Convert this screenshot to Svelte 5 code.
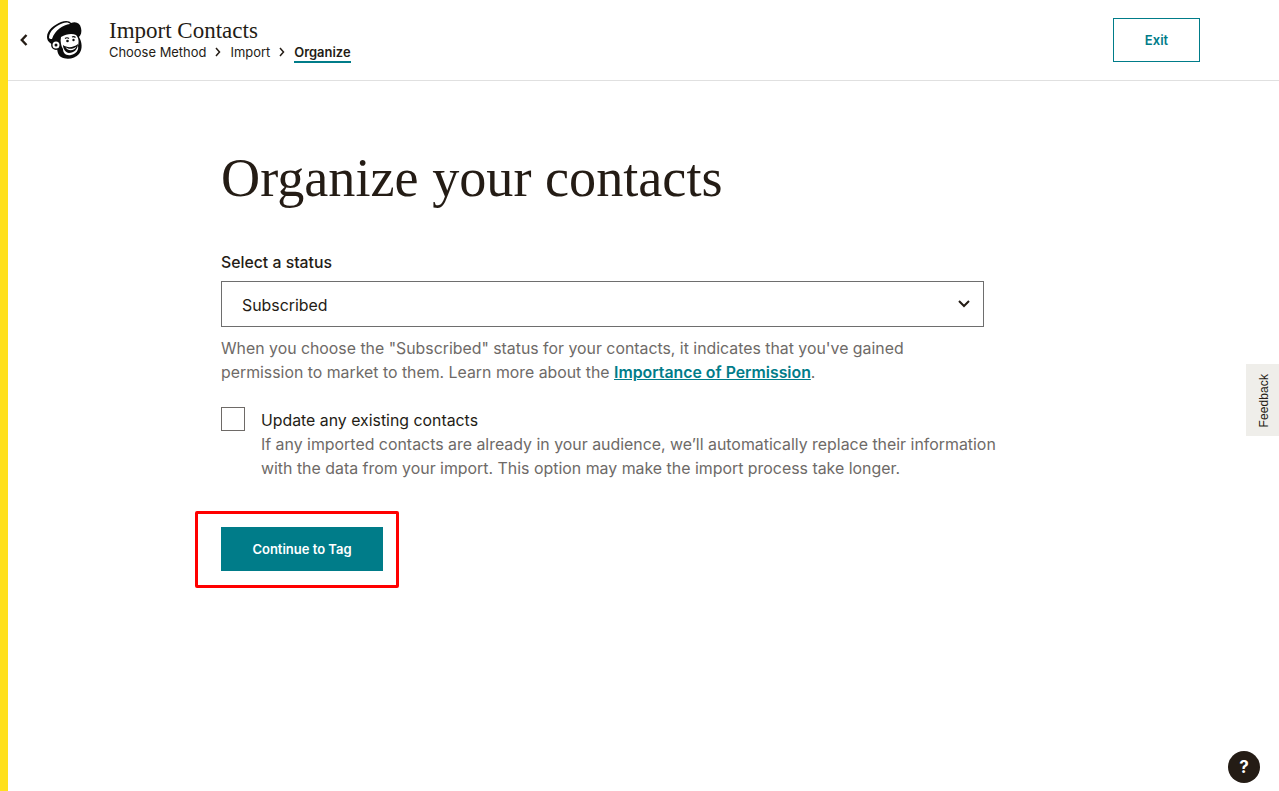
<script>
  const crumbs = ['Choose Method', 'Import'];
</script>

<div class="page">
  <div class="strip"></div>
  <div class="content">
    <header class="top">
      <button class="back" aria-label="Back">
        <svg width="10" height="14" viewBox="0 0 10 14"><path d="M7.500 2 L2.800 7 L7.500 12" fill="none" stroke="#241c15" stroke-width="2.400"/></svg>
      </button>
      <svg class="logo" width="38" height="40" viewBox="0 0 38 40" aria-label="Mailchimp">
        <path d="M11 26 C6 25 1 22 1 17 C1 10 8 5 15 2 C20 0 24 1 25 3 C30 1 34 3 35 8 C36 12 35 15 33 17 C36 22 37 29 33 34 C29 39 20 40 15 37 C12 35 11 31 11 26Z" fill="#0b0b0b"/>
        <path d="M3 17.500 C3 11 10 6 16 3.500 C20 2 23 2.500 24 4 C17 5 9 10 6 19 C4.500 19 3 18.500 3 17.500Z" fill="#fff"/>
        <path d="M15 17 C20 14 26 13 30 15 C33 18 33 22 32 26 C33 30 30 34 25 35 C20 36 17 33 17 29 C15 26 14 21 15 17Z" fill="#fff"/>
        <path d="M17 25 C21 28 27 28 32 24 C32 29 28 33 23 33 C20 33 17 29 17 25Z" fill="#0b0b0b"/>
        <path d="M19.500 27 C22 29.500 27 29.500 30.500 26.500 C29 30.500 22 32 19.500 27Z" fill="#fff"/>
        <path d="M19 18.500 q2 -1.500 4 0 M26 17 q2 -1 3.500 .5" fill="none" stroke="#0b0b0b" stroke-width="1.200"/>
        <circle cx="21.500" cy="21" r="1.300" fill="#0b0b0b"/>
        <circle cx="27.500" cy="20" r="1.200" fill="#0b0b0b"/>
        <circle cx="10" cy="25" r="4.200" fill="#fff" stroke="#0b0b0b" stroke-width="1.400"/>
        <circle cx="10" cy="25" r="1.500" fill="#0b0b0b"/>
      </svg>
      <div class="titles">
        <div class="title">Import Contacts</div>
        <nav class="crumbs">
          {#each crumbs as c}
            <span>{c}</span>
            <svg class="sep" width="6" height="10" viewBox="0 0 6 10"><path d="M1 1 L4.500 5 L1 9" fill="none" stroke="#241c15" stroke-width="1.500"/></svg>
          {/each}
          <span class="current">Organize</span>
        </nav>
      </div>
      <button class="exit">Exit</button>
    </header>

    <main class="main">
      <h1>Organize your contacts</h1>
      <div class="label">Select a status</div>
      <div class="select">
        <span>Subscribed</span>
        <svg width="12" height="8" viewBox="0 0 12 8"><path d="M1 1 L6 6 L11 1" fill="none" stroke="#241c15" stroke-width="2"/></svg>
      </div>
      <p class="help">When you choose the "Subscribed" status for your contacts, it indicates that you've gained permission to market to them. Learn more about the <a href="#top">Importance of Permission</a>.</p>
      <div class="check">
        <span class="box"></span>
        <div>
          <div class="check-title">Update any existing contacts</div>
          <p class="help flush">If any imported contacts are already in your audience, we’ll automatically replace their information with the data from your import. This option may make the import process take longer.</p>
        </div>
      </div>
      <div class="action">
        <button class="primary">Continue to Tag</button>
        <div class="highlight"></div>
      </div>
    </main>
  </div>
  <div class="feedback"><span>Feedback</span></div>
  <button class="helpbtn">?</button>
</div>

<style>
  :global(body) { margin: 0; background: #fff; }
  .page {
    display: flex; height: 791px; overflow: hidden; position: relative;
    font-family: Inter, "Liberation Sans", sans-serif; color: #241c15;
  }
  .strip { width: 8px; flex: none; background: #ffe01b; }
  .content { flex: 1; min-width: 0; }
  .top {
    height: 80px; border-bottom: 1px solid #e0e0e0; display: flex; align-items: center;
    padding-left: 11px; padding-right: 79px;
  }
  .back { width: 10px; height: 14px; padding: 0; border: 0; background: none; display: flex; }
  .logo { margin-left: 17px; }
  .titles { margin-left: 25px; margin-top: 2px; }
  .title { font: 23px/24px "Liberation Serif", serif; color: #241c15; }
  .crumbs { display: flex; align-items: center; font-size: 12.950px; line-height: 20px; margin-top: -2px; }
  .sep { margin: 0 9px; }
  .current { font-weight: 600; border-bottom: 2px solid #007c89; line-height: 18px; margin-top: 2px; }
  .exit {
    margin-left: auto; width: 87px; height: 44px; box-sizing: border-box; background: #fff;
    border: 1px solid #007c89; color: #007c89; font: 600 13px Inter, sans-serif; padding: 0;
  }
  .main { padding-left: 213px; width: 776px; }
  h1 { font: 400 54.200px/60px "Liberation Serif", serif; margin: 67px 0 0; color: #241c15; }
  .label { font-size: 15.800px; font-weight: 500; line-height: 20px; margin-top: 45px; }
  .select {
    width: 763px; height: 46px; box-sizing: border-box; margin-top: 8px; border: 1px solid #6e6e6e;
    display: flex; align-items: center; justify-content: space-between; padding: 2px 13px 0 20px;
    font-size: 15.900px;
  }
  .select svg { margin-top: -2px; }
  .help { font-size: 15.850px; line-height: 24px; color: #6e6a67; margin: 10px 0 0; width: 763px; }
  .help a { color: #007c89; font-weight: 600; }
  .help.flush { margin: 0; width: 740px; font-size: 15.900px; }
  .check { display: flex; gap: 16px; margin-top: 22px; }
  .box { width: 24px; height: 24px; box-sizing: border-box; border: 1px solid #6e6a67; flex: none; }
  .check-title { font-size: 15.850px; line-height: 24px; margin-top: 2px; }
  .action { position: relative; margin-top: 46px; width: 162px; }
  .primary {
    width: 162px; height: 44px; background: #007c89; color: #fff; border: 0; padding: 0;
    font: 600 13px Inter, sans-serif; display: block;
  }
  .highlight {
    position: absolute; left: -26px; top: -16px; width: 204px; height: 77px; box-sizing: border-box;
    border: 3px solid #f00; border-radius: 2px;
  }
  .feedback {
    position: absolute; right: 0; top: 364px; width: 33px; height: 72px; background: #efeeea;
    display: flex; align-items: center; justify-content: center;
  }
  .feedback span { writing-mode: vertical-rl; transform: rotate(180deg); font: 12px "Liberation Sans", sans-serif; letter-spacing: .1px; margin-left: 2px; margin-top: 2px; }
  .helpbtn {
    position: absolute; left: 1228px; top: 751px; width: 32px; height: 32px; border-radius: 50%;
    background: #241c15; color: #fff; border: 0; padding: 0; font: 700 17px Inter, sans-serif;
  }
</style>
